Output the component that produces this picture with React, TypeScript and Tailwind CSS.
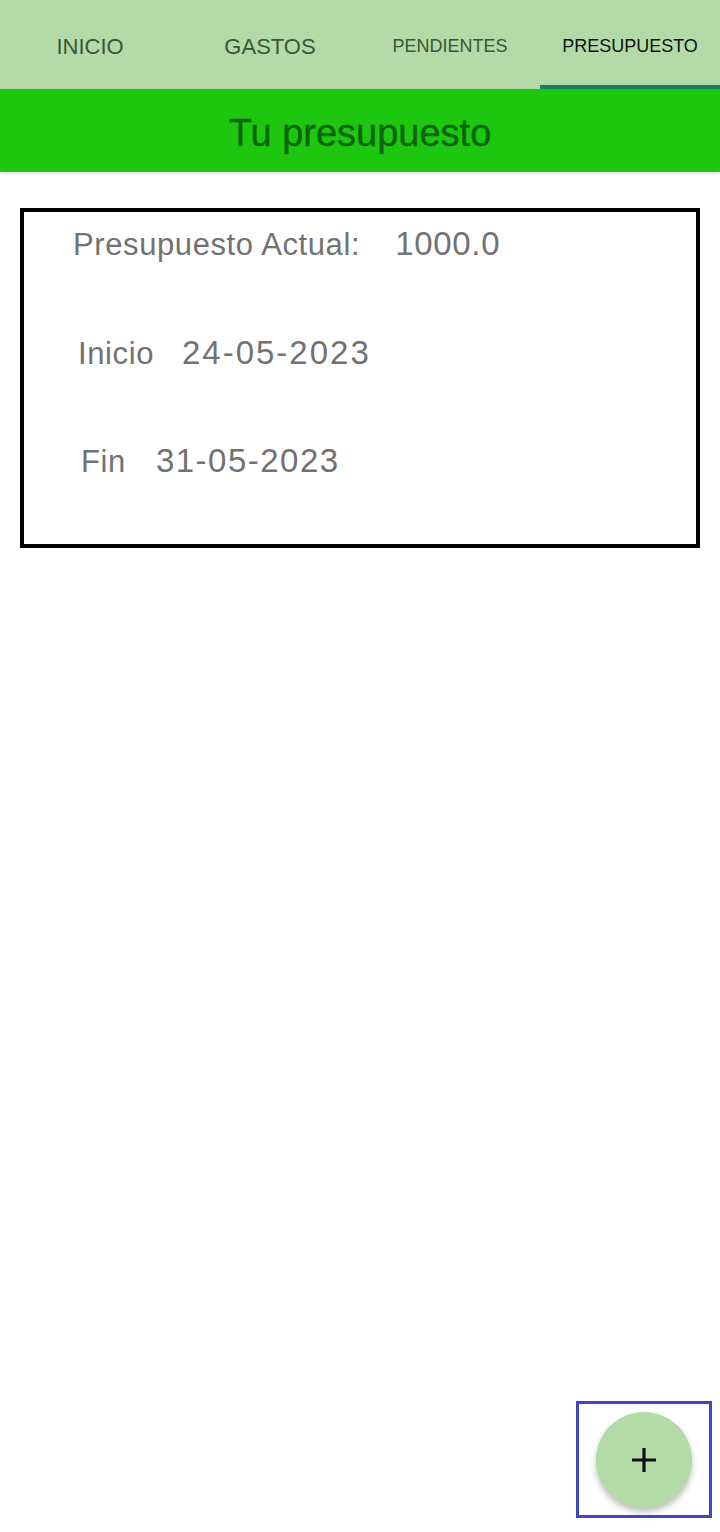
import React from "react";

const tabs = [
  { label: "INICIO", size: "text-[22px]", color: "text-[#3b5636]" },
  { label: "GASTOS", size: "text-[22px]", color: "text-[#3b5636]" },
  { label: "PENDIENTES", size: "text-[18px]", color: "text-[#3b5636]" },
  { label: "PRESUPUESTO", size: "text-[18px]", color: "text-[#111]", active: true },
];

export default function App() {
  return (
    <div
      className="relative flex h-[1532px] w-[720px] flex-col bg-white"
      style={{ fontFamily: "'Liberation Sans', Arial, sans-serif" }}
    >
      {/* pestañas */}
      <div className="flex h-[89px] bg-[#b3dba8]">
        {tabs.map((t) => (
          <div key={t.label} className="relative flex flex-1 items-center justify-center pt-[4px]">
            <span className={`${t.size} ${t.color}`}>{t.label}</span>
            {t.active && <div className="absolute bottom-0 left-0 right-0 h-[4px] bg-[#1b7d5b]" />}
          </div>
        ))}
      </div>

      {/* cabecera */}
      <div className="flex h-[83px] items-center justify-center bg-[#1dc710] pt-[6px] shadow-[0_2px_3px_rgba(0,0,0,0.12)]">
        <h1 className="text-[38px] text-[#0b650a] [-webkit-text-stroke:0.4px_#0b650a]">Tu presupuesto</h1>
      </div>

      {/* resumen */}
      <div className="mx-[20px] mt-[36px] flex h-[340px] flex-col border-[4px] border-black pt-[14px] text-[31px] leading-[36px] text-[#727272]">
        <div className="ml-[49px] flex items-baseline gap-[35px]">
          <span className="tracking-[0.6px]">Presupuesto Actual:</span>
          <span className="text-[33px] tracking-[0.7px]">1000.0</span>
        </div>
        <div className="ml-[54px] mt-[72px] flex items-baseline gap-[28px]">
          <span className="tracking-[0.6px]">Inicio</span>
          <span className="text-[33px] tracking-[2px]">24-05-2023</span>
        </div>
        <div className="ml-[57px] mt-[71px] flex items-baseline gap-[30px]">
          <span className="tracking-[0.6px]">Fin</span>
          <span className="text-[33px] tracking-[1.5px]">31-05-2023</span>
        </div>
      </div>

      {/* botón flotante */}
      <div className="absolute left-[576px] top-[1401px] flex h-[117px] w-[136px] items-center justify-center border-[3px] border-[#3f48c0]">
        <button className="flex h-[96px] w-[96px] items-center justify-center rounded-full bg-[#b3dba8] shadow-[0_4px_6px_rgba(0,0,0,0.25)]">
          <svg width="28" height="28" viewBox="0 0 28 28">
            <path d="M14 2v24M2 14h24" stroke="#111" strokeWidth="3.2" />
          </svg>
        </button>
      </div>
    </div>
  );
}
